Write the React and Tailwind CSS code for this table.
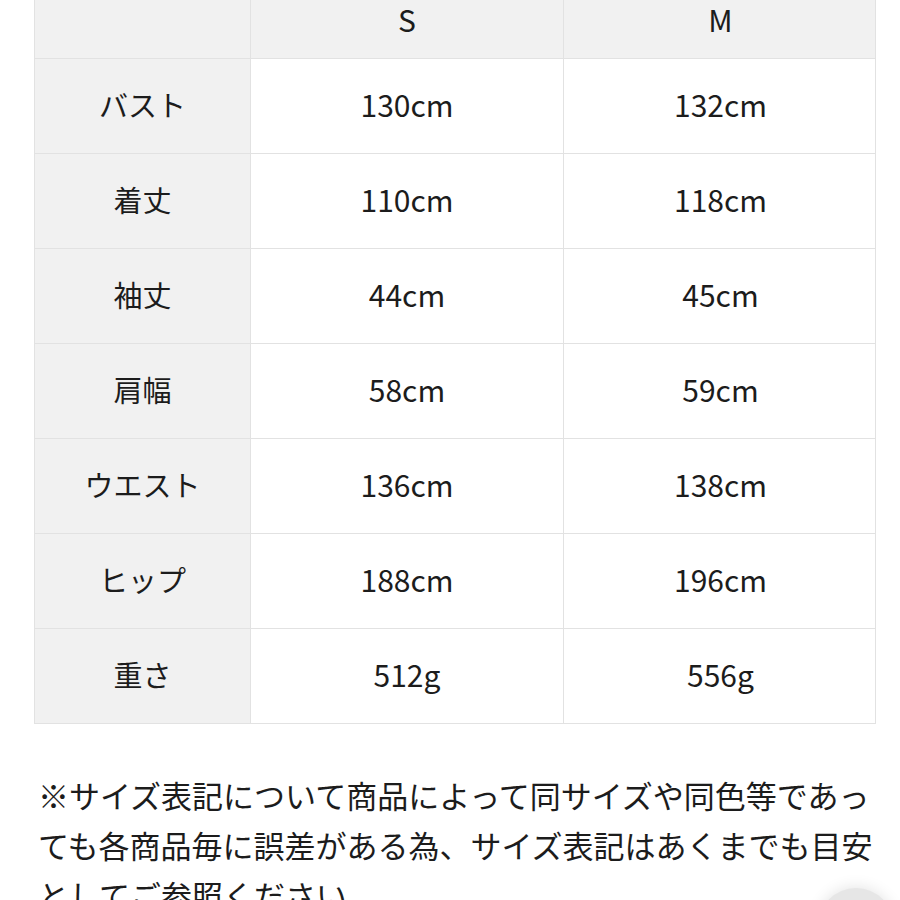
export default function App() {
  const rows = [
    ["バスト", "130cm", "132cm"],
    ["着丈", "110cm", "118cm"],
    ["袖丈", "44cm", "45cm"],
    ["肩幅", "58cm", "59cm"],
    ["ウエスト", "136cm", "138cm"],
    ["ヒップ", "188cm", "196cm"],
    ["重さ", "512g", "556g"],
  ];
  const font = { fontFamily: '"Noto Sans CJK JP", "Noto Sans", sans-serif' };
  return (
    <div className="relative w-[900px] h-[900px] overflow-hidden bg-white text-[#1c1c1c]" style={font}>
      <div className="ml-[34px] mt-[-19px] w-[842px] border border-[#e2e2e2]">
        <div className="grid grid-cols-[216px_313px_313px] h-[76px] bg-[#f1f1f1] text-[30px] leading-none">
          <div className="border-r border-[#e2e2e2]"></div>
          <div className="flex items-center justify-center pb-[3px] border-r border-[#e2e2e2]">S</div>
          <div className="flex items-center justify-center pb-[3px]">M</div>
        </div>
        {rows.map((r) => (
          <div key={r[0]} className="grid grid-cols-[216px_313px_313px] h-[95px] border-t border-[#e2e2e2] text-[30px] leading-none">
            <div className="flex items-center justify-center pb-[4px] bg-[#f1f1f1] border-r border-[#e2e2e2] text-[29px]">{r[0]}</div>
            <div className="flex items-center justify-center pb-[4px] border-r border-[#e2e2e2]">{r[1]}</div>
            <div className="flex items-center justify-center pb-[4px]">{r[2]}</div>
          </div>
        ))}
      </div>
      <p className="ml-[38px] mt-[46px] w-[840px] text-[31px] leading-[50px] text-[#1c1c1c]">
        ※サイズ表記について商品によって同サイズや同色等であっても各商品毎に誤差がある為、サイズ表記はあくまでも目安としてご参照ください。
      </p>
      <div className="absolute left-[818px] top-[888px] w-[76px] h-[76px] rounded-full bg-[#e6e6e6] shadow-[0_0_16px_rgba(0,0,0,0.12)]"></div>
    </div>
  );
}
